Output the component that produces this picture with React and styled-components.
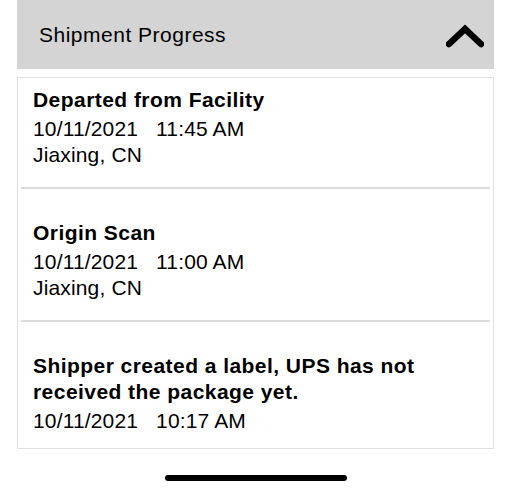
import React from "react";
import styled, { createGlobalStyle } from "styled-components";

const GlobalStyle = createGlobalStyle`
  html, body {
    margin: 0;
    padding: 0;
    background: #ffffff;
  }
  body {
    font-family: "Liberation Sans", Arial, Helvetica, sans-serif;
    color: #000000;
  }
`;

const events = [
  { title: "Departed from Facility", date: "10/11/2021", time: "11:45 AM", place: "Jiaxing, CN" },
  { title: "Origin Scan", date: "10/11/2021", time: "11:00 AM", place: "Jiaxing, CN" },
  {
    title: "Shipper created a label, UPS has not received the package yet.",
    date: "10/11/2021",
    time: "10:17 AM",
  },
];

function App() {
  return (
    <Screen>
      <GlobalStyle />
      <Panel>
        <Header>
          <HeaderTitle>Shipment Progress</HeaderTitle>
          <Chevron width="38" height="24" viewBox="0 0 38 24">
            <polyline points="3,20 19,5 35,20" />
          </Chevron>
        </Header>
        <Card>
          {events.map((ev, i) => (
            <Event key={i}>
              <Title>{ev.title}</Title>
              <Line>
                {ev.date}
                <Time>{ev.time}</Time>
              </Line>
              {ev.place && <Line>{ev.place}</Line>}
            </Event>
          ))}
        </Card>
      </Panel>
      <HomeBar />
    </Screen>
  );
}

const Screen = styled.div`
  width: 512px;
  height: 492px;
  display: flex;
  flex-direction: column;
  align-items: center;
`;

const Panel = styled.div`
  width: 477px;
  margin-left: -1px;
`;

const Header = styled.div`
  height: 69px;
  background: #d4d4d4;
  display: flex;
  align-items: center;
  justify-content: space-between;
  padding: 0 10px 0 22px;
  box-sizing: border-box;
`;

const HeaderTitle = styled.span`
  font-size: 21px;
  font-weight: 400;
  letter-spacing: 0.5px;
  margin-top: 1px;
`;

const Chevron = styled.svg`
  margin-top: 2px;
  polyline {
    fill: none;
    stroke: #000;
    stroke-width: 6.5;
    stroke-linecap: round;
    stroke-linejoin: miter;
  }
`;

const Card = styled.div`
  margin-top: 8px;
  border: 1px solid #e0e0e0;
  padding: 0 3px;
`;

const Event = styled.div`
  padding: 31px 12px 19px;
  border-bottom: 2px solid #dcdcdc;

  &:first-child {
    padding-top: 9px;
  }
  &:last-child {
    border-bottom: none;
    padding-bottom: 14px;
  }
`;

const Title = styled.div`
  font-size: 21px;
  line-height: 26px;
  font-weight: 700;
  letter-spacing: 0.45px;
  margin-bottom: 3px;
  padding-right: 45px;
`;

const Line = styled.div`
  font-size: 21px;
  line-height: 26px;
  letter-spacing: 0.15px;
`;

const Time = styled.span`
  margin-left: 18px;
`;

const HomeBar = styled.div`
  margin-top: 26px;
  width: 182px;
  height: 6px;
  border-radius: 3px;
  background: #000;
`;

export default App;
